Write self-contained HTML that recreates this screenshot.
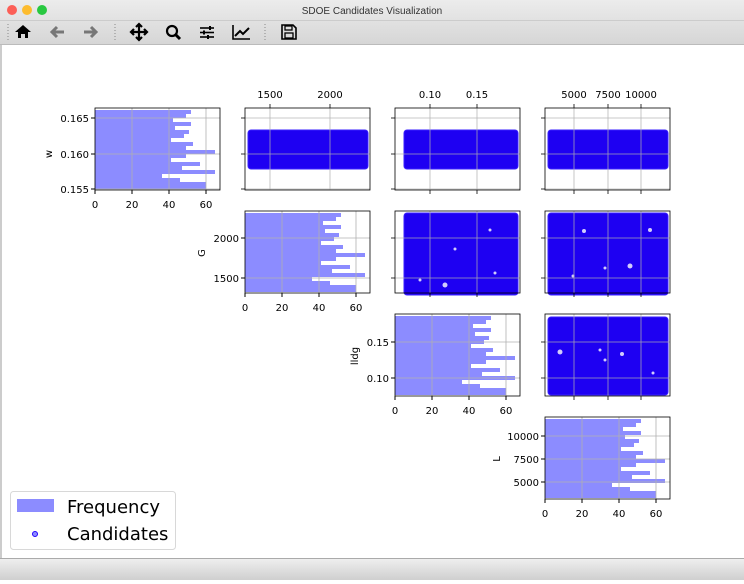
<!DOCTYPE html><html><head><style>body{margin:0;width:744px;height:580px;overflow:hidden;background:#fff;font-family:"DejaVu Sans","Liberation Sans",sans-serif}</style></head><body>
<svg width="744" height="580" xmlns="http://www.w3.org/2000/svg" font-family="DejaVu Sans, Liberation Sans, sans-serif" font-size="10" fill="#000">
<defs>
<linearGradient id="tb" x1="0" y1="0" x2="0" y2="1"><stop offset="0" stop-color="#ececec"/><stop offset="1" stop-color="#d6d6d6"/></linearGradient>
<linearGradient id="sb" x1="0" y1="0" x2="0" y2="1"><stop offset="0" stop-color="#f0f0f0"/><stop offset="1" stop-color="#cfcfcf"/></linearGradient>
<g id="bars" fill="#8c8cff">
<rect x="0" y="2" width="96" height="4"/><rect x="0" y="6" width="91" height="4"/><rect x="0" y="10" width="78" height="4"/><rect x="0" y="14" width="96" height="4"/><rect x="0" y="18" width="80" height="4"/><rect x="0" y="22" width="94" height="4"/><rect x="0" y="26" width="89" height="4"/><rect x="0" y="30" width="76" height="4"/><rect x="0" y="34" width="98" height="4"/><rect x="0" y="38" width="91" height="4"/><rect x="0" y="42" width="120" height="4"/><rect x="0" y="46" width="91" height="4"/><rect x="0" y="50" width="76" height="4"/><rect x="0" y="54" width="105" height="4"/><rect x="0" y="58" width="87" height="4"/><rect x="0" y="62" width="120" height="4"/><rect x="0" y="66" width="67" height="4"/><rect x="0" y="70" width="85" height="4"/><rect x="0" y="74" width="111" height="4"/><rect x="0" y="78" width="111" height="3"/>
</g>
<g id="hgrid" stroke="#b0b0b0" stroke-width="0.8"><line x1="37" y1="0" x2="37" y2="82"/><line x1="74" y1="0" x2="74" y2="82"/><line x1="111" y1="0" x2="111" y2="82"/></g>
<g id="xl" text-anchor="middle"><text x="0" y="100">0</text><text x="37" y="100">20</text><text x="74" y="100">40</text><text x="111" y="100">60</text>
<g stroke="#000"><line x1="0" y1="82" x2="0" y2="86"/><line x1="37" y1="82" x2="37" y2="86"/><line x1="74" y1="82" x2="74" y2="86"/><line x1="111" y1="82" x2="111" y2="86"/></g></g>
</defs>
<rect x="0" y="0" width="744" height="44" fill="url(#tb)"/>
<line x1="0" y1="44.5" x2="744" y2="44.5" stroke="#bbb"/>
<circle cx="12" cy="10" r="5" fill="#fc5f57"/><circle cx="27" cy="10" r="5" fill="#fdbc2e"/><circle cx="42" cy="10" r="5" fill="#28c840"/>
<text x="372" y="14" text-anchor="middle" font-size="10" fill="#333" font-family="Liberation Sans, sans-serif">SDOE Candidates Visualization</text>
<line x1="0" y1="20.5" x2="744" y2="20.5" stroke="#ccc"/>
<g stroke="#888" stroke-dasharray="1,2"><line x1="8" y1="24" x2="8" y2="42"/><line x1="115" y1="24" x2="115" y2="42"/><line x1="265" y1="24" x2="265" y2="42"/></g>
<path d="M15 32 L23 25 L31 32 L28 32 L28 38 L25 38 L25 34 L21 34 L21 38 L18 38 L18 32 Z" fill="#000"/>
<path d="M64 32 H52 M57 27 L52 32 L57 37" stroke="#777" stroke-width="3" fill="none"/>
<path d="M84 32 H96 M91 27 L96 32 L91 37" stroke="#777" stroke-width="3" fill="none"/>
<path d="M131 32 H147 M139 24 V40 M136 27 L139 24 L142 27 M136 37 L139 40 L142 37 M134 29 L131 32 L134 35 M144 29 L147 32 L144 35" stroke="#000" stroke-width="2.2" fill="none"/>
<circle cx="172" cy="31" r="5" stroke="#000" stroke-width="2.2" fill="none"/><path d="M176 35 L180 39" stroke="#000" stroke-width="3"/>
<g stroke="#000" stroke-width="1.6"><line x1="200" y1="28" x2="214" y2="28"/><line x1="200" y1="32.5" x2="214" y2="32.5"/><line x1="200" y1="37" x2="214" y2="37"/></g>
<g fill="#000"><rect x="209" y="26" width="2" height="4"/><rect x="203" y="30.5" width="2" height="4"/><rect x="207" y="35" width="2" height="4"/></g>
<path d="M233 25 V39 H250" stroke="#000" stroke-width="1.6" fill="none"/><path d="M235 36 L240 31 L243 34 L249 28" stroke="#000" stroke-width="2" fill="none"/>
<path d="M282 25 H293 L296 28 V39 H282 Z" stroke="#000" stroke-width="1.6" fill="none"/><rect x="285" y="26" width="7" height="4" fill="none" stroke="#000" stroke-width="1.3"/><rect x="285" y="33" width="8" height="5" fill="none" stroke="#000" stroke-width="1.3"/>
<rect x="0" y="45" width="2" height="513" fill="#ccc"/>
<rect x="0" y="558" width="744" height="22" fill="url(#sb)"/><line x1="0" y1="558.5" x2="744" y2="558.5" stroke="#aaa"/>

<g transform="translate(95,108)"><use href="#bars"/><use href="#hgrid"/><g stroke="#b0b0b0" stroke-width="0.8"><line x1="0" y1="10" x2="125" y2="10"/><line x1="0" y1="46" x2="125" y2="46"/><line x1="0" y1="81" x2="125" y2="81"/></g><rect x="0" y="0" width="125" height="82" fill="none" stroke="#000" stroke-width="0.8"/><use href="#xl"/>
<g text-anchor="end"><text x="-6" y="14">0.165</text><text x="-6" y="50">0.160</text><text x="-6" y="85">0.155</text></g>
<g stroke="#000"><line x1="-4" y1="10" x2="0" y2="10"/><line x1="-4" y1="46" x2="0" y2="46"/><line x1="-4" y1="81" x2="0" y2="81"/></g>
<text transform="translate(-43,46) rotate(-90)" text-anchor="middle">w</text></g>

<g transform="translate(245,211)"><use href="#bars"/><use href="#hgrid"/><g stroke="#b0b0b0" stroke-width="0.8"><line x1="0" y1="27" x2="125" y2="27"/><line x1="0" y1="67" x2="125" y2="67"/></g><rect x="0" y="0" width="125" height="82" fill="none" stroke="#000" stroke-width="0.8"/><use href="#xl"/>
<g text-anchor="end"><text x="-6" y="31">2000</text><text x="-6" y="71">1500</text></g>
<g stroke="#000"><line x1="-4" y1="27" x2="0" y2="27"/><line x1="-4" y1="67" x2="0" y2="67"/></g>
<text transform="translate(-40,42) rotate(-90)" text-anchor="middle">G</text></g>

<g transform="translate(395,314)"><use href="#bars"/><use href="#hgrid"/><g stroke="#b0b0b0" stroke-width="0.8"><line x1="0" y1="28" x2="125" y2="28"/><line x1="0" y1="64" x2="125" y2="64"/></g><rect x="0" y="0" width="125" height="82" fill="none" stroke="#000" stroke-width="0.8"/><use href="#xl"/>
<g text-anchor="end"><text x="-6" y="32">0.15</text><text x="-6" y="68">0.10</text></g>
<g stroke="#000"><line x1="-4" y1="28" x2="0" y2="28"/><line x1="-4" y1="64" x2="0" y2="64"/></g>
<text transform="translate(-37,42) rotate(-90)" text-anchor="middle">lldg</text></g>

<g transform="translate(545,417)"><use href="#bars"/><use href="#hgrid"/><g stroke="#b0b0b0" stroke-width="0.8"><line x1="0" y1="19" x2="125" y2="19"/><line x1="0" y1="42" x2="125" y2="42"/><line x1="0" y1="65" x2="125" y2="65"/></g><rect x="0" y="0" width="125" height="82" fill="none" stroke="#000" stroke-width="0.8"/><use href="#xl"/>
<g text-anchor="end"><text x="-6" y="23">10000</text><text x="-6" y="46">7500</text><text x="-6" y="69">5000</text></g>
<g stroke="#000"><line x1="-4" y1="19" x2="0" y2="19"/><line x1="-4" y1="42" x2="0" y2="42"/><line x1="-4" y1="65" x2="0" y2="65"/></g>
<text transform="translate(-45,42) rotate(-90)" text-anchor="middle">L</text></g>

<g text-anchor="middle"><text x="270" y="98">1500</text><text x="330" y="98">2000</text><text x="430" y="98">0.10</text><text x="477" y="98">0.15</text><text x="574" y="98">5000</text><text x="608" y="98">7500</text><text x="641" y="98">10000</text></g>

<g fill="#1e00f2" stroke="#3a20ff" stroke-width="1">
<rect x="248" y="130" width="120" height="39" rx="3"/>
<rect x="404" y="130" width="114" height="39" rx="3"/>
<rect x="548" y="130" width="120" height="39" rx="3"/>
<rect x="404" y="213" width="114" height="82" rx="3"/>
<rect x="548" y="213" width="120" height="82" rx="3"/>
<rect x="548" y="317" width="120" height="78" rx="3"/>
</g>
<g fill="#fff" opacity="0.8">
<circle cx="445" cy="285" r="2.5"/><circle cx="455" cy="249" r="1.5"/><circle cx="490" cy="230" r="1.5"/><circle cx="420" cy="280" r="1.5"/><circle cx="495" cy="273" r="1.5"/>
<circle cx="584" cy="231" r="2"/><circle cx="630" cy="266" r="2.5"/><circle cx="605" cy="268" r="1.5"/><circle cx="650" cy="230" r="2"/><circle cx="573" cy="276" r="1.5"/>
<circle cx="560" cy="352" r="2.5"/><circle cx="622" cy="354" r="2"/><circle cx="600" cy="350" r="1.5"/><circle cx="605" cy="360" r="1.5"/><circle cx="653" cy="373" r="1.5"/>
</g>
<g stroke="#b0b0b0" stroke-width="0.8" opacity="0.9">
<line x1="270" y1="108" x2="270" y2="190"/><line x1="330" y1="108" x2="330" y2="190"/>
<line x1="430" y1="108" x2="430" y2="190"/><line x1="477" y1="108" x2="477" y2="190"/>
<line x1="574" y1="108" x2="574" y2="190"/><line x1="608" y1="108" x2="608" y2="190"/><line x1="641" y1="108" x2="641" y2="190"/>
<line x1="245" y1="118" x2="370" y2="118"/><line x1="245" y1="154" x2="370" y2="154"/><line x1="245" y1="189" x2="370" y2="189"/>
<line x1="395" y1="118" x2="520" y2="118"/><line x1="395" y1="154" x2="520" y2="154"/><line x1="395" y1="189" x2="520" y2="189"/>
<line x1="545" y1="118" x2="670" y2="118"/><line x1="545" y1="154" x2="670" y2="154"/><line x1="545" y1="189" x2="670" y2="189"/>
<line x1="430" y1="211" x2="430" y2="293"/><line x1="477" y1="211" x2="477" y2="293"/><line x1="395" y1="238" x2="520" y2="238"/><line x1="395" y1="278" x2="520" y2="278"/>
<line x1="574" y1="211" x2="574" y2="293"/><line x1="608" y1="211" x2="608" y2="293"/><line x1="641" y1="211" x2="641" y2="293"/><line x1="545" y1="238" x2="670" y2="238"/><line x1="545" y1="278" x2="670" y2="278"/>
<line x1="574" y1="314" x2="574" y2="396"/><line x1="608" y1="314" x2="608" y2="396"/><line x1="641" y1="314" x2="641" y2="396"/><line x1="545" y1="342" x2="670" y2="342"/><line x1="545" y1="378" x2="670" y2="378"/>
</g>
<g fill="none" stroke="#000" stroke-width="0.8">
<rect x="245" y="108" width="125" height="82"/><rect x="395" y="108" width="125" height="82"/><rect x="545" y="108" width="125" height="82"/>
<rect x="395" y="211" width="125" height="82"/><rect x="545" y="211" width="125" height="82"/><rect x="545" y="314" width="125" height="82"/>
</g>
<g stroke="#000" stroke-width="0.8">
<line x1="241" y1="118" x2="245" y2="118"/><line x1="241" y1="154" x2="245" y2="154"/><line x1="241" y1="189" x2="245" y2="189"/>
<line x1="391" y1="118" x2="395" y2="118"/><line x1="391" y1="154" x2="395" y2="154"/><line x1="391" y1="189" x2="395" y2="189"/>
<line x1="541" y1="118" x2="545" y2="118"/><line x1="541" y1="154" x2="545" y2="154"/><line x1="541" y1="189" x2="545" y2="189"/>
<line x1="391" y1="238" x2="395" y2="238"/><line x1="391" y1="278" x2="395" y2="278"/><line x1="541" y1="238" x2="545" y2="238"/><line x1="541" y1="278" x2="545" y2="278"/>
<line x1="541" y1="342" x2="545" y2="342"/><line x1="541" y1="378" x2="545" y2="378"/>
<line x1="270" y1="104" x2="270" y2="108"/><line x1="330" y1="104" x2="330" y2="108"/><line x1="430" y1="104" x2="430" y2="108"/><line x1="477" y1="104" x2="477" y2="108"/><line x1="574" y1="104" x2="574" y2="108"/><line x1="608" y1="104" x2="608" y2="108"/><line x1="641" y1="104" x2="641" y2="108"/>
<line x1="430" y1="190" x2="430" y2="194"/><line x1="477" y1="190" x2="477" y2="194"/><line x1="574" y1="190" x2="574" y2="194"/><line x1="608" y1="190" x2="608" y2="194"/><line x1="641" y1="190" x2="641" y2="194"/>
<line x1="430" y1="293" x2="430" y2="297"/><line x1="477" y1="293" x2="477" y2="297"/><line x1="574" y1="293" x2="574" y2="297"/><line x1="608" y1="293" x2="608" y2="297"/><line x1="641" y1="293" x2="641" y2="297"/>
<line x1="574" y1="396" x2="574" y2="400"/><line x1="608" y1="396" x2="608" y2="400"/><line x1="641" y1="396" x2="641" y2="400"/>
</g>

<rect x="10.5" y="491.5" width="165" height="58" rx="3" fill="#fff" stroke="#d8d8d8"/>
<rect x="17" y="499" width="37" height="13" fill="#8c8cff"/>
<text x="67" y="513" font-size="18">Frequency</text>
<circle cx="35" cy="534" r="2.5" fill="#8c8cff" stroke="#2200ff" stroke-width="1"/>
<text x="67" y="540" font-size="18">Candidates</text>
</svg>
</body></html>
